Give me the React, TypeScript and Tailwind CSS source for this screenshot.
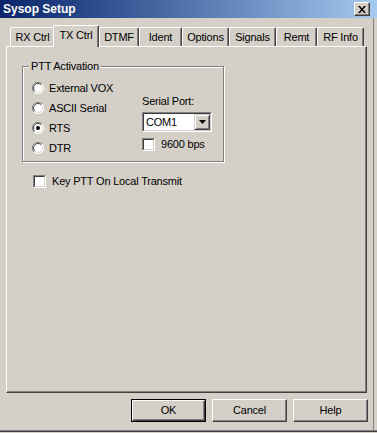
import React from 'react';

const tabs = [
  { label: 'RX Ctrl', cls: 'w-[45px]' },
  { label: 'TX Ctrl', cls: 'w-[46px]', active: true },
  { label: 'DTMF', cls: 'w-[40px]' },
  { label: 'Ident', cls: 'w-[43px]' },
  { label: 'Options', cls: 'w-[47px]' },
  { label: 'Signals', cls: 'w-[47px]' },
  { label: 'Remt', cls: 'w-[41px]' },
  { label: 'RF Info', cls: 'w-[47px]' },
];

const radios = ['External VOX', 'ASCII Serial', 'RTS', 'DTR'];

function Radio({ checked }: { checked?: boolean }) {
  return (
    <svg width="12" height="12" viewBox="0 0 12 12" className="shrink-0">
      <circle cx="6" cy="6" r="5.5" fill="#fff" />
      <path d="M10 2 A5.5 5.5 0 0 0 2 10" fill="none" stroke="#808080" strokeWidth="1" />
      <path d="M9.2 2.8 A4.5 4.5 0 0 0 2.8 9.2" fill="none" stroke="#404040" strokeWidth="1" />
      <path d="M2 10 A5.5 5.5 0 0 0 10 2" fill="none" stroke="#fff" strokeWidth="1" />
      <path d="M2.8 9.2 A4.5 4.5 0 0 0 9.2 2.8" fill="none" stroke="#d4d0c8" strokeWidth="1" />
      {checked && <circle cx="6" cy="6" r="2" fill="#000" />}
    </svg>
  );
}

function Check() {
  return (
    <div className="w-[13px] h-[13px] shrink-0 border border-t-[#808080] border-l-[#808080] border-r-white border-b-white">
      <div className="w-full h-full bg-white border border-t-[#404040] border-l-[#404040] border-r-[#d4d0c8] border-b-[#d4d0c8]" />
    </div>
  );
}

function Button({ label, def }: { label: string; def?: boolean }) {
  return (
    <div className={def ? 'w-[75px] h-[23px] border border-black' : 'w-[75px] h-[23px]'}>
      <div className="w-full h-full flex items-center justify-center border border-t-white border-l-white border-r-[#404040] border-b-[#404040] shadow-[inset_-1px_-1px_0_#808080]">
        {label}
      </div>
    </div>
  );
}

export default function App() {
  return (
    <div className="w-[377px] h-[433px] bg-[#d4d0c8] text-black text-[11px] leading-[13px] tracking-[-0.2px] font-['Liberation_Sans',Arial,sans-serif] overflow-hidden">
      {/* title bar */}
      <div className="h-[18px] flex items-center justify-between bg-linear-to-r from-[#0a246a] to-[#a6caf0] pl-[3px] pr-[7px]">
        <span className="text-white font-bold text-[12px] tracking-normal">Sysop Setup</span>
        <div className="w-[16px] h-[14px] bg-[#d4d0c8] border border-t-white border-l-white border-r-[#404040] border-b-[#404040] shadow-[inset_-1px_-1px_0_#808080] flex items-center justify-center">
          <svg width="8" height="7" viewBox="0 0 8 7">
            <path d="M0 0h2l2 2.5L6 0h2L5 3.5 8 7H6L4 4.5 2 7H0l3-3.5z" fill="#000" />
          </svg>
        </div>
      </div>

      <div className="flex h-[412px]">
        <div className="w-[373px] pl-[6px]">
          {/* tabs */}
          <div className="h-[21px] mt-[7px] flex items-end pl-[4px]">
            {tabs.map((t) =>
              t.active ? (
                <div
                  key={t.label}
                  className={`${t.cls} h-[22px] -mb-[1px] -ml-[2px] relative z-10 bg-[#d4d0c8] flex justify-center pt-[3px] border-t border-l border-white border-r border-r-[#404040] shadow-[inset_-1px_0_0_#808080] rounded-t-[2px]`}
                >
                  {t.label}
                </div>
              ) : (
                <div
                  key={t.label}
                  className={`${t.cls} h-[19px] flex items-center justify-center border-t border-l border-white border-r border-r-[#404040] shadow-[inset_-1px_0_0_#808080] rounded-t-[2px]`}
                >
                  {t.label}
                </div>
              )
            )}
          </div>

          {/* tab page */}
          <div className="w-[361px] h-[347px] border border-t-white border-l-white border-r-[#404040] border-b-[#404040] shadow-[inset_-1px_-1px_0_#808080] pl-[15px] pt-[19px]">
            <div className="relative w-[202px] h-[96px] border border-[#808080] shadow-[inset_1px_1px_0_#fff,1px_1px_0_#fff] flex pl-[9px]">
              <span className="absolute -top-[7px] left-[6px] px-[2px] bg-[#d4d0c8]">PTT Activation</span>
              <div className="w-[110px] pt-[11px] flex flex-col">
                {radios.map((r) => (
                  <div key={r} className="h-[20px] flex items-center gap-[5px]">
                    <Radio checked={r === 'RTS'} />
                    <span>{r}</span>
                  </div>
                ))}
              </div>
              <div className="pt-[28px] flex flex-col">
                <span>Serial Port:</span>
                <div className="mt-[4px] w-[70px] h-[20px] border border-t-[#808080] border-l-[#808080] border-r-white border-b-white">
                  <div className="w-full h-full bg-white border border-t-[#404040] border-l-[#404040] border-r-[#d4d0c8] border-b-[#d4d0c8] flex items-center justify-between pl-[2px]">
                    <span>COM1</span>
                    <div className="w-[16px] h-full bg-[#d4d0c8] border border-t-[#d4d0c8] border-l-[#d4d0c8] border-r-[#404040] border-b-[#404040] shadow-[inset_1px_1px_0_#fff,inset_-1px_-1px_0_#808080] flex items-center justify-center">
                      <svg width="7" height="4" viewBox="0 0 7 4">
                        <path d="M0 0h7L3.5 4z" fill="#000" />
                      </svg>
                    </div>
                  </div>
                </div>
                <div className="mt-[6px] flex items-center gap-[6px]">
                  <Check />
                  <span>9600 bps</span>
                </div>
              </div>
            </div>

            <div className="mt-[13px] ml-[11px] flex items-center gap-[6px]">
              <Check />
              <span>Key PTT On Local Transmit</span>
            </div>
          </div>

          {/* buttons */}
          <div className="mt-[6px] flex justify-end gap-[6px] pr-[5px]">
            <Button label="OK" def />
            <Button label="Cancel" />
            <Button label="Help" />
          </div>
        </div>
        <div className="w-[4px] h-full border-l border-[#808080]" />
      </div>
      {/* window bottom edge */}
      <div className="h-[2px] border-t border-t-[#808080] border-b border-b-[#404040]" />
    </div>
  );
}
